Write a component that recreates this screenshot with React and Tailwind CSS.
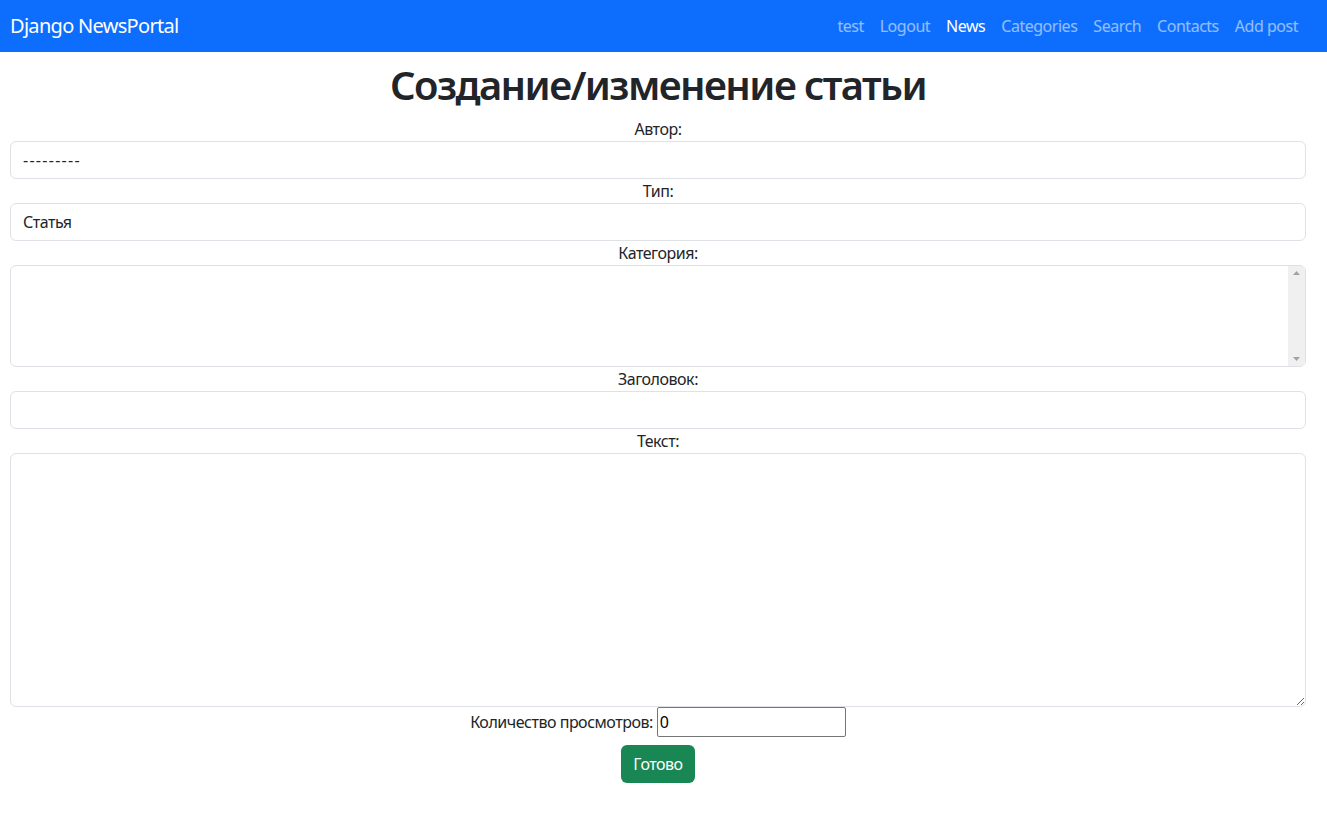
import React from "react";

const FONT = { fontFamily: '"Noto Sans", "Open Sans", sans-serif' };

const links = [
  { label: "test" },
  { label: "Logout" },
  { label: "News", active: true },
  { label: "Categories" },
  { label: "Search" },
  { label: "Contacts" },
  { label: "Add post" },
];

const Label = ({ children }) => (
  <label className="block h-[24px] text-center text-[16px] leading-[24px] text-[#212529]">
    {children}
  </label>
);

const boxCls =
  "w-full rounded-[6px] border border-[#dee2e6] bg-white px-[12px] text-[16px] text-[#212529] outline-none";

export default function App() {
  return (
    <div className="min-h-screen bg-white tracking-[-0.03em]" style={FONT}>
      <nav className="bg-[#0d6efd]">
        <div className="flex h-[52px] items-center justify-between pl-[10px] pr-[21px]">
          <a className="text-[20px] leading-[30px] tracking-[-0.035em] text-white">Django NewsPortal</a>
          <ul className="flex items-center">
            {links.map((l) => (
              <li key={l.label}>
                <a
                  className={
                    "block px-[8px] text-[16px] leading-[24px] " +
                    (l.active ? "text-white" : "text-white/55")
                  }
                >
                  {l.label}
                </a>
              </li>
            ))}
          </ul>
        </div>
      </nav>

      <div className="pl-[10px] pr-[21px] pt-[9px]">
        <h1 className="mb-[8px] text-center text-[40px] font-semibold leading-[48px] tracking-[-0.04em] text-[#212529]">
          Создание/изменение статьи
        </h1>

        <form>
          <Label>Автор:</Label>
          <select className={boxCls + " h-[38px] appearance-none tracking-[0.08em]"} defaultValue="">
            <option value="">---------</option>
          </select>

          <Label>Тип:</Label>
          <select className={boxCls + " h-[38px] appearance-none tracking-[-0.03em]"} defaultValue="AR">
            <option value="AR">Статья</option>
          </select>

          <Label>Категория:</Label>
          <div className="flex h-[102px] w-full overflow-hidden rounded-[6px] border border-[#dee2e6] bg-white">
            <div className="flex-1" />
            <div className="flex w-[17px] flex-col items-center justify-between bg-[#f0f0f0] py-[5px]">
              <svg width="7" height="4" viewBox="0 0 7 4">
                <path d="M0 4 L3.5 0 L7 4 Z" fill="#a3a3a3" />
              </svg>
              <svg width="7" height="4" viewBox="0 0 7 4">
                <path d="M0 0 L3.5 4 L7 0 Z" fill="#a3a3a3" />
              </svg>
            </div>
          </div>

          <Label>Заголовок:</Label>
          <input type="text" className={boxCls + " h-[38px]"} />

          <Label>Текст:</Label>
          <textarea className={boxCls + " block h-[254px] py-[6px]"} />

          <div className="flex h-[30px] items-center justify-center text-[16px] text-[#212529]">
            <span className="mr-[4px]">Количество просмотров:</span>
            <input
              type="number"
              defaultValue={0}
              className="h-[30px] w-[189px] rounded-[2px] border border-[#767676] px-[2px] text-[16px] text-black outline-none"
            />
          </div>

          <div className="mt-[8px] flex justify-center">
            <button
              type="button"
              className="h-[38px] rounded-[6px] bg-[#198754] px-[12px] text-[16px] leading-[24px] text-white"
            >
              Готово
            </button>
          </div>
        </form>
      </div>
    </div>
  );
}
